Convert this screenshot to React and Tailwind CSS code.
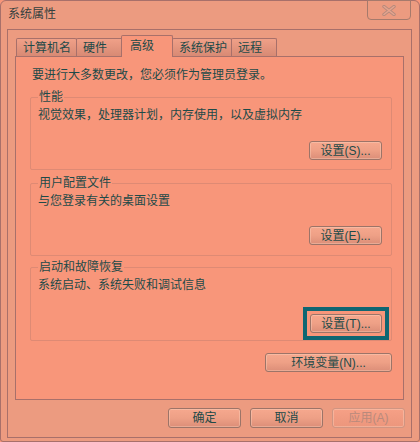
import React from "react"

const line = "border-[#a8706a]"

const WinButton = ({ label, className = "", disabled = false }) => {
  return (
    <button
      className={
        "h-[19px] rounded-[3px] border text-[12px] leading-[14px] bg-linear-to-b shadow-[inset_0_0_0_1px_rgba(255,220,200,0.35)] " +
        (disabled
          ? "border-[#cf9582] from-[#f6a086] to-[#ec967c] text-[#b98a7c] "
          : "border-[#9c7468] from-[#f6a88e] via-[#eea086] to-[#dc8e78] text-[#1e4a48] ") +
        className
      }
    >
      {label}
    </button>
  )
}

const GroupBox = ({ title, desc, children, height }) => {
  return (
    <div className={"relative ml-[14px] w-[362px] border border-[#de8a74] rounded-[2px] flex flex-col " + height}>
      <span className="absolute left-[7px] -top-[8px] bg-[#f8967a] px-px leading-[14px] text-[12px]">{title}</span>
      <div className="pl-[7px] pt-[10px] leading-[14px] text-[12px]">{desc}</div>
      <div className="mt-auto flex justify-end">{children}</div>
    </div>
  )
}

const Tab = ({ label, width, selected }) => {
  if (selected) {
    return (
      <div className={"relative z-10 -mb-px h-[22px] border-t border-l border-r rounded-t-[2px] bg-[#f8967a] pl-[8px] pt-[3px] text-[12px] leading-[14px] " + line + " " + width}>
        {label}
      </div>
    )
  }
  return (
    <div className={"h-[18px] border-t border-l border-r rounded-t-[2px] bg-linear-to-b from-[#f0a088] to-[#d88a74] pl-[6px] pt-[2px] text-[12px] leading-[14px] -mr-px " + line + " " + width}>
      {label}
    </div>
  )
}

const App = () => {
  return (
    <div className="w-[420px] h-[442px] bg-[#f8967a] font-['Liberation_Sans','Noto_Sans_CJK_SC',sans-serif] text-[#1e4a48]">
      <div className={"w-[420px] h-[442px] border rounded-t-[6px] rounded-b-[3px] bg-[#ec9b80] flex flex-col " + line}>
        {/* title bar */}
        <div className="h-[28px] flex justify-between">
          <div className="pl-[7px] pt-[6px] text-[12px] leading-[14px] text-[#34403e]">系统属性</div>
          <div className="mr-[8px] -mt-px w-[44px] h-[20px] rounded-b-[4px] border border-[#a67a6c] flex items-center justify-center">
            <svg width="14" height="11" viewBox="0 0 14 11">
              <path d="M2 1.5 L12 9.5 M12 1.5 L2 9.5" stroke="#b58a7c" strokeWidth="3.4" strokeLinecap="round" />
              <path d="M2 1.5 L12 9.5 M12 1.5 L2 9.5" stroke="#e6a48e" strokeWidth="1.6" strokeLinecap="round" />
            </svg>
          </div>
        </div>

        {/* client area */}
        <div className={"ml-[6px] w-[405px] h-[409px] border flex flex-col " + line}>
          <div className="mt-[5px] pl-[8px] h-[21px] flex items-end">
            <Tab label="计算机名" width="w-[61px]" />
            <Tab label="硬件" width="w-[47px]" />
            <Tab label="高级" width="w-[52px] -ml-px" selected />
            <Tab label="系统保护" width="w-[60px] -ml-px" />
            <Tab label="远程" width="w-[46px]" />
          </div>

          <div className={"ml-[7px] w-[389px] h-[344px] border bg-[#f8967a] flex flex-col " + line}>
            <div className="pl-[16px] pt-[11px] text-[12px] leading-[14px]">要进行大多数更改，您必须作为管理员登录。</div>

            <div className="mt-[15px]">
              <GroupBox title="性能" desc="视觉效果，处理器计划，内存使用，以及虚拟内存" height="h-[73px]">
                <WinButton label="设置(S)..." className="w-[73px] mr-[9px] mb-[9px]" />
              </GroupBox>
            </div>

            <div className="mt-[13px]">
              <GroupBox title="用户配置文件" desc="与您登录有关的桌面设置" height="h-[73px]">
                <WinButton label="设置(E)..." className="w-[73px] mr-[9px] mb-[10px]" />
              </GroupBox>
            </div>

            <div className="mt-[11px]">
              <GroupBox title="启动和故障恢复" desc="系统启动、系统失败和调试信息" height="h-[74px]">
                <div className="mr-[2px] border-4 border-[#0f6672] p-[3px]">
                  <WinButton label="设置(T)..." className="w-[72px] block" />
                </div>
              </GroupBox>
            </div>

            <div className="ml-[14px] w-[362px] mt-[12px] flex justify-end">
              <WinButton label="环境变量(N)..." className="w-[127px]" />
            </div>
          </div>

          <div className="mt-[8px] pr-[6px] flex justify-end gap-[9px]">
            <WinButton label="确定" className="w-[73px] h-[20px]" />
            <WinButton label="取消" className="w-[73px] h-[20px]" />
            <WinButton label="应用(A)" className="w-[73px] h-[20px]" disabled />
          </div>
        </div>
      </div>
    </div>
  )
}

export default App
